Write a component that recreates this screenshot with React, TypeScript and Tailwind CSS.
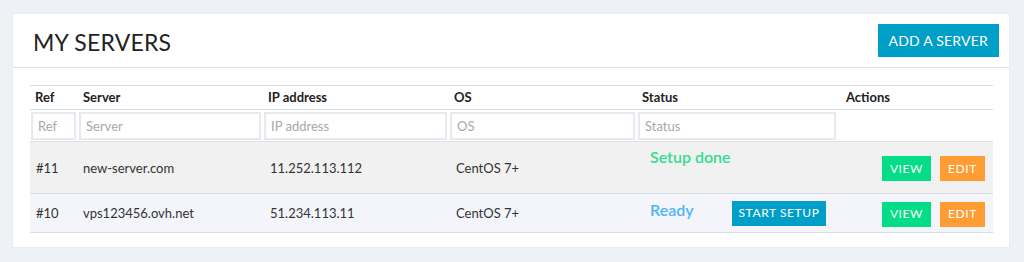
import React from "react";

type Server = {
  ref: string;
  name: string;
  ip: string;
  os: string;
  status: "done" | "ready";
};

const servers: Server[] = [
  { ref: "#11", name: "new-server.com", ip: "11.252.113.112", os: "CentOS 7+", status: "done" },
  { ref: "#10", name: "vps123456.ovh.net", ip: "51.234.113.11", os: "CentOS 7+", status: "ready" },
];

const columns = [
  { label: "Ref", width: "w-[48px]" },
  { label: "Server", width: "w-[185px]" },
  { label: "IP address", width: "w-[186px]" },
  { label: "OS", width: "w-[188px]" },
  { label: "Status", width: "w-[201px]" },
];

export default function App() {
  return (
    <div className="w-[1024px] h-[262px] bg-[#eef2f6] pt-[13px] pl-[12px] font-['Lato','Liberation_Sans',sans-serif] text-[#333]">
      <div className="w-[998px] h-[235px] bg-white border border-[#e9edf1]">
        <div className="flex items-center justify-between h-[54px] pl-[20px] pr-[10px] border-b border-[#dde2e8]">
          <h1 className="text-[23px] text-[#222] tracking-[0.2px] mt-[4px]">MY SERVERS</h1>
          <button className="h-[33px] px-[11px] bg-[#009fc7] text-white text-[14px] tracking-[0.2px]">
            ADD A SERVER
          </button>
        </div>

        <div className="pt-[17px] px-[17px]">
          <table className="w-[963px] border-collapse table-fixed text-[13px]">
            <thead>
              <tr className="h-[24px] border-t border-b border-[#d7dde6]">
                {columns.map((c) => (
                  <th key={c.label} className={`${c.width} text-left font-bold pl-[5px] pt-[1px] text-[#222]`}>
                    {c.label}
                  </th>
                ))}
                <th className="text-left font-bold pl-[8px] pt-[1px] text-[#222]">Actions</th>
              </tr>
              <tr className="h-[32px] border-b border-[#dde2e8]">
                {columns.map((c) => (
                  <td key={c.label} className="pl-[1px] pr-[2px] py-0">
                    <input
                      placeholder={c.label}
                      className="w-full h-[28px] border-2 border-[#e6eaef] px-[5px] text-[13px] placeholder:text-[#a8a8a8] outline-none"
                    />
                  </td>
                ))}
                <td />
              </tr>
            </thead>
            <tbody>
              {servers.map((s) => (
                <tr
                  key={s.ref}
                  className={
                    s.status === "done"
                      ? "h-[52px] bg-[#f1f1f1] border-b border-[#d7dde6]"
                      : "h-[39px] bg-[#f4f5fa] border-b border-[#d7dde6]"
                  }
                >
                  <td className="pl-[6px] pt-[2px]">{s.ref}</td>
                  <td className="pl-[5px] pt-[2px]">{s.name}</td>
                  <td className="pl-[7px] pt-[2px]">{s.ip}</td>
                  <td className="pl-[7px] pt-[2px]">{s.os}</td>
                  <td className={s.status === "done" ? "align-top pt-[3px] pl-[13px]" : "pl-[13px] pr-[12px]"}>
                    {s.status === "done" ? (
                      <span className="text-[16px] font-semibold text-[#33dd8f]">Setup done</span>
                    ) : (
                      <div className="flex items-center justify-between">
                        <span className="text-[16px] font-semibold text-[#4bb5f5] -mt-[6px]">Ready</span>
                        <button className="h-[25px] w-[94px] bg-[#009fc7] text-white text-[12px] tracking-[0.6px]">
                          START SETUP
                        </button>
                      </div>
                    )}
                  </td>
                  <td className="pr-[8px]">
                    <div className="flex justify-end gap-[9px] pt-[2px]">
                      <button className="h-[25px] w-[49px] bg-[#04dc86] text-white text-[12px] tracking-[0.6px]">
                        VIEW
                      </button>
                      <button className="h-[25px] w-[45px] bg-[#ff9d34] text-white text-[12px] tracking-[0.6px]">
                        EDIT
                      </button>
                    </div>
                  </td>
                </tr>
              ))}
            </tbody>
          </table>
        </div>
      </div>
    </div>
  );
}
